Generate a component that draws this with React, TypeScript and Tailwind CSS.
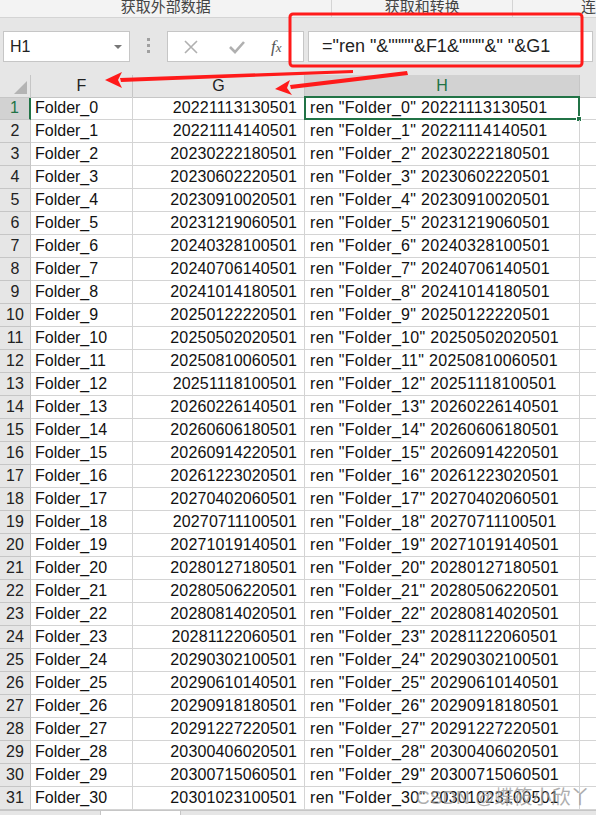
import React from "react";

const DATES = [
  "20221113130501", "20221114140501", "20230222180501", "20230602220501", "20230910020501",
  "20231219060501", "20240328100501", "20240706140501", "20241014180501", "20250122220501",
  "20250502020501", "20250810060501", "20251118100501", "20260226140501", "20260606180501",
  "20260914220501", "20261223020501", "20270402060501", "20270711100501", "20271019140501",
  "20280127180501", "20280506220501", "20280814020501", "20281122060501", "20290302100501",
  "20290610140501", "20290918180501", "20291227220501", "20300406020501", "20300715060501",
  "20301023100501",
];

const COLS = "grid grid-cols-[31px_102px_172px_275px_1fr]";
const FONT = { fontFamily: '"Liberation Sans", "Noto Sans CJK SC", sans-serif' };

function Ribbon() {
  return (
    <div className="flex h-[18px] border-b border-[#d4d4d4] bg-[#f3f3f3] text-[15px] leading-[14px] text-[#444]">
      <div className="flex w-[333px] justify-center border-r border-[#d4d4d4]">获取外部数据</div>
      <div className="flex w-[181px] justify-center border-r border-[#d4d4d4]">获取和转换</div>
      <div className="flex-1 pl-[68px]">连</div>
    </div>
  );
}

function FormulaBar() {
  return (
    <div className="flex h-[57px] items-start bg-[#e6e6e6] px-[3px] pt-[13px]">
      <div className="flex h-[31px] w-[127px] items-center justify-between border border-[#c6c6c6] bg-white pl-[6px] pr-[7px] text-[16px] text-[#222]">
        <span>H1</span>
        <span className="h-0 w-0 border-x-[4px] border-t-[4px] border-x-transparent border-t-[#777]" />
      </div>
      <div className="flex w-[37px] flex-col items-center justify-center gap-[3px] pt-[7px]">
        <span className="h-[3px] w-[3px] bg-[#a0a0a0]" />
        <span className="h-[3px] w-[3px] bg-[#a0a0a0]" />
        <span className="h-[3px] w-[3px] bg-[#a0a0a0]" />
      </div>
      <div className="flex h-[31px] w-[137px] items-center border border-[#c6c6c6] bg-white">
        <svg width="16" height="16" viewBox="0 0 16 16" className="ml-[15px]">
          <path d="M2 2 L14 14 M14 2 L2 14" stroke="#b0b0b0" strokeWidth="1.6" />
        </svg>
        <svg width="18" height="16" viewBox="0 0 18 16" className="ml-[29px]">
          <path d="M2 8 L7 13 L16 3" stroke="#b0b0b0" strokeWidth="2.6" fill="none" />
        </svg>
        <span className="ml-[25px] text-[17px] italic text-[#555]" style={{ fontFamily: '"Liberation Serif", serif' }}>
          f<span className="text-[13px]">x</span>
        </span>
      </div>
      <div className="ml-[4px] flex h-[31px] flex-1 items-center border border-[#c6c6c6] bg-white pl-[13px] text-[18px] text-[#222]">
        ="ren "&amp;""""&amp;F1&amp;""""&amp;" "&amp;G1
      </div>
    </div>
  );
}

function HeaderRow() {
  return (
    <div className={`${COLS} h-[22px] bg-[#e6e6e6] text-[16px] leading-[21px] text-[#222]`}>
      <div className="relative border-r border-b border-[#c6c6c6]">
        <span className="absolute bottom-[3px] right-[3px] h-0 w-0 border-b-[13px] border-l-[13px] border-b-[#b4b4b4] border-l-transparent" />
      </div>
      <div className="border-r border-b border-[#c6c6c6] text-center">F</div>
      <div className="border-r border-b border-[#c6c6c6] text-center">G</div>
      <div className="border-r border-b-2 border-r-[#c6c6c6] border-b-[#217346] bg-[#d2d2d2] text-center text-[#217346]">H</div>
      <div className="border-b border-[#c6c6c6]" />
    </div>
  );
}

function DataRow({ i, date }: { i: number; date: string }) {
  const first = i === 0;
  return (
    <div className={`${COLS} h-[23px] text-[16px] leading-[22px] text-[#111]`}>
      <div
        className={
          first
            ? "border-b border-r-2 border-b-[#c6c6c6] border-r-[#217346] bg-[#d2d2d2] text-center text-[#217346]"
            : "border-b border-r border-[#c6c6c6] bg-[#e6e6e6] text-center text-[#222]"
        }
      >
        {i + 1}
      </div>
      <div className="border-b border-r border-[#d4d4d4] pl-[4px]">Folder_{i}</div>
      <div className="border-b border-r border-[#d4d4d4] pr-[7px] text-right tracking-[0.15px]">{date}</div>
      <div className="relative border-b border-r border-[#d4d4d4] pl-[5px] tracking-[0.3px]">
        ren "Folder_{i}" {date}
        {first && (
          <span className="absolute -left-px -top-px -right-px -bottom-px border-2 border-[#217346]">
            <span className="absolute -bottom-[4px] -right-[4px] h-[6px] w-[6px] border border-white bg-[#217346]" />
          </span>
        )}
      </div>
      <div className="border-b border-[#d4d4d4]" />
    </div>
  );
}

function Annotations() {
  return (
    <svg className="pointer-events-none absolute left-0 top-0" width="596" height="815">
      <rect x="290" y="14" width="292" height="52" rx="3" fill="none" stroke="#ff1a1a" strokeWidth="3" />
      <path d="M353 70 L120 78 L121 82 L353 73 Z" fill="#ff1a1a" />
      <path d="M105 80 L122 72 L118 80 L122 88 Z" fill="#ff1a1a" />
      <path d="M407 71 L290 85 L291 89 L408 75 Z" fill="#ff1a1a" />
      <path d="M275 89 L290 80 L287 88 L292 95 Z" fill="#ff1a1a" />
    </svg>
  );
}

export default function App() {
  return (
    <div className="relative h-[815px] w-[596px] overflow-hidden bg-white" style={FONT}>
      <Ribbon />
      <FormulaBar />
      <HeaderRow />
      {DATES.map((d, i) => (
        <DataRow key={i} i={i} date={d} />
      ))}
      <div className="flex h-[30px] border-t border-[#c6c6c6] bg-[#e6e6e6] text-[15px]">
        <div className="ml-[100px] w-[81px] border-x border-[#c6c6c6] bg-white pt-[3px] text-center text-[#217346]">Sheet1</div>
        <div className="ml-[42px] mt-[4px] h-[18px] w-[18px] rounded-full border border-[#888]" />
      </div>
      <div className="pointer-events-none absolute left-[416px] top-[784px] text-[19px] text-[#9a9a9a] opacity-80">
        CSDN @蝶筱小欣丫
      </div>
      <Annotations />
    </div>
  );
}
